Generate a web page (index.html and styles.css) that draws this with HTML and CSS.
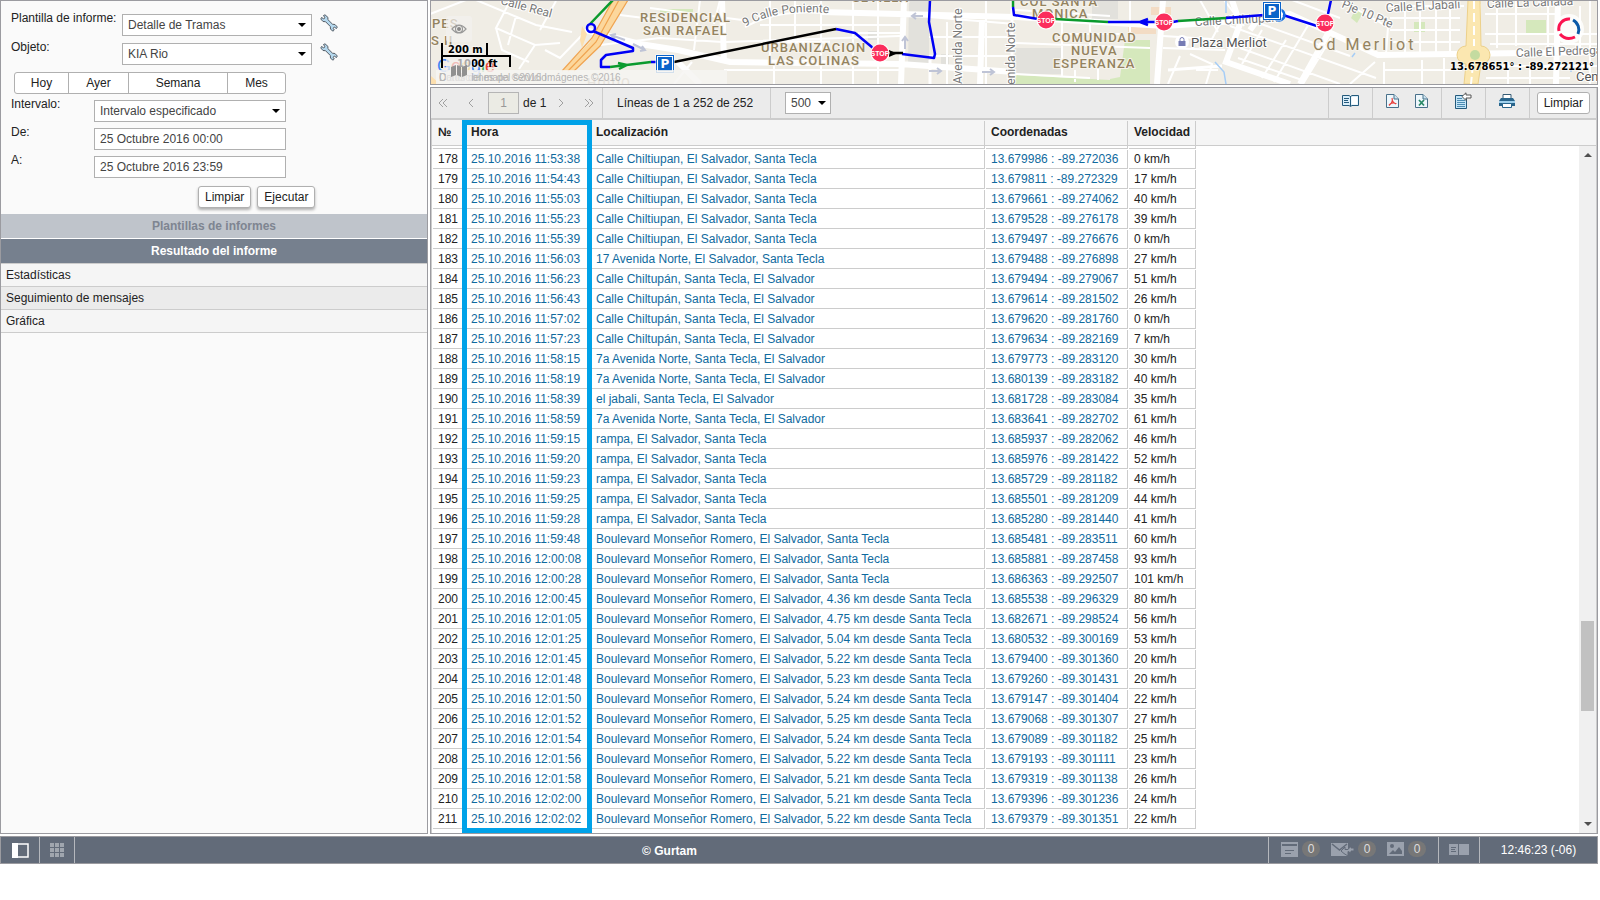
FILE: index.html
```html
<!DOCTYPE html>
<html lang="es">
<head>
<meta charset="utf-8">
<title>Informes</title>
<link rel="stylesheet" href="styles.css">
</head>
<body>
<div class="app">
<div class="workspace">
<aside class="side">
  <form class="form">
    <div class="field"><label class="wide-label" for="tpl">Plantilla de informe:</label><span class="select wide"><select id="tpl"><option>Detalle de Tramas</option></select></span><button type="button" class="tool" aria-label="Propiedades de plantilla"><svg width="18" height="18" viewBox="0 0 18 18"><path class="wrench" d="M3.500 1.500 5 .8 8 3.500 7.800 5.500 12.500 10.200 15 10.500 17.300 13 16.500 14.500 14.300 13.200 13 14.300 14.300 16 13 17.200 10.500 15.200 10.300 12.500 5.500 7.700 3 7.500.8 5 1.500 3.500 3.700 4.800 5 3.800Z"/></svg></button></div>
    <div class="field"><label class="wide-label" for="obj">Objeto:</label><span class="select wide"><select id="obj"><option>KIA Rio</option></select></span><button type="button" class="tool" aria-label="Propiedades de objeto"><svg width="18" height="18" viewBox="0 0 18 18"><path class="wrench" d="M3.500 1.500 5 .8 8 3.500 7.800 5.500 12.500 10.200 15 10.500 17.300 13 16.500 14.500 14.300 13.200 13 14.300 14.300 16 13 17.200 10.500 15.200 10.300 12.500 5.500 7.700 3 7.500.8 5 1.500 3.500 3.700 4.800 5 3.800Z"/></svg></button></div>
    <div class="periods"><button type="button" class="hoy">Hoy</button><button type="button" class="ayer">Ayer</button><button type="button" class="semana">Semana</button><button type="button" class="mes">Mes</button></div>
    <div class="field"><label class="label" for="intv">Intervalo:</label><span class="select mid"><select id="intv"><option>Intervalo especificado</option></select></span></div>
    <div class="field"><label class="label" for="from">De:</label><input class="text mid" id="from" type="text" value="25 Octubre 2016 00:00"></div>
    <div class="field"><label class="label" for="to">A:</label><input class="text mid" id="to" type="text" value="25 Octubre 2016 23:59"></div>
    <div class="actions"><button type="button" class="btn raised">Limpiar</button><button type="button" class="btn raised">Ejecutar</button></div>
  </form>
  <h2 class="bar muted">Plantillas de informes</h2>
  <h2 class="bar">Resultado del informe</h2>
  <ul class="results"><li><a href="#stats">Estadísticas</a></li><li class="on"><a href="#messages">Seguimiento de mensajes</a></li><li><a href="#chart">Gráfica</a></li></ul>
</aside>

<main class="main">
<section class="map" aria-label="Mapa">
<svg class="map-svg" viewBox="431 1 1166 83" preserveAspectRatio="xMinYMin slice">
  <defs>
    <g id="stop"><circle r="9.500" fill="#fff"/><circle r="8.500" fill="#fb2d5c"/><text class="stop-text" y="3" text-anchor="middle">STOP</text></g>
    <g id="park"><rect x="-9.500" y="-9.500" width="19" height="19" fill="#fff"/><rect x="-9" y="-9" width="18" height="18" fill="#0a63c9"/><rect x="-7.500" y="-7.500" width="15" height="15" fill="none" stroke="#fff"/><text class="park-text" y="4" text-anchor="middle">P</text></g>
  </defs>
  <rect x="431" y="1" width="1166" height="83" fill="#f0ede5"/>
  <!-- blocks and parks -->
  <path fill="#e2e1dc" d="M909 0h20v66h-21zM941 54h8v11h-8zM868 31h10v9h-10zM1015 48h47v26h-47zM1092 0h26v19h-26z"/>
  <path fill="#d5e8bc" d="M1015 75 1110 80V84H1015ZM1125 40H1150V84H1110V79L1120 77ZM1414 22h11v10h-11zM1526 20h20v13h-20zM1356 8 1363 13 1357 23 1351 18ZM660 9h33v4h-33z"/>
  <path fill="#f3dcc4" d="M1128 27h28v7h-28zM1151 7h20v8h-20z"/>
  <!-- minor streets -->
  <g fill="none" stroke="#fff" stroke-width="2">
    <path d="M466 0 430 14M476 0 536 25 572 32M510 1 496 28 535 45 560 43M496 28 502 50 529 62M516 16 508 45M535 45 519 69M556 1 540 30M585 32 560 58 545 50M620 15 660 20M650 8 742 20M700 0 694 50M720 0 714 24M600 45 660 38 722 42M674 84 692 62M770 0V58M795 0V44M821 0V84M853 0V84M878 0V84M760 25H900M725 42 900 36M724 70H900M774 60V84M858 33H905M947 22V84M929 17 1015 24M929 37H1015M986 0V84M929 56H1015M1062 18V78M1090 18V46M1015 43 1150 48M1062 34H1120M1015 74 1090 78M1098 66V80M1075 70V82M1130 0V40M1015 10 1110 16M1163 48 1225 50M1180 56 1168 84M1190 54 1212 64 1206 84M1196 70H1218M1163 36 1212 39 1222 20"/>
    <path d="M1200 0 1218 32M1224 0 1244 26M1230 26 1376 78M1240 48 1340 84M1238 58 1302 80M1250 20 1350 56M1262 30 1242 64M1286 40 1262 78M1310 22 1274 82M1331 38 1303 84M1292 0 1340 18M1340 0 1388 27 1386 54M1375 62 1350 84M1388 6H1464M1390 18H1460M1390 30H1460M1392 42H1460M1405 4V54M1420 4V54M1436 4V54M1450 0V54M1384 62V84M1422 60V84M1444 58V84M1384 70H1462M1480 4V50M1497 4V48M1516 0V46M1548 6V50M1580 6V50M1485 14H1560M1485 34H1597M1490 44H1597M1486 66H1597M1486 78H1570M1508 62V84M1530 62V84M1590 0V84"/>
  </g>
  <!-- main streets -->
  <g fill="none" stroke="#fff" stroke-width="6">
    <path d="M585 30 640 44 678 50 730 62 900 64 1015 72M722 0 724 62M678 62 700 84M821 12 1015 17 1165 26 1222 22 1290 14 1378 55 1597 52M904 0 901 84M982 20 980 84M1163 0 1157 84M1232 0 1240 24 1226 62 1290 84M1330 30 1300 84M1558 0 1556 84M1262 14 1250 30"/>
    <path stroke-width="3" d="M930 60V84M1012 0V84M770 42H830M1168 70 1222 66"/>
  </g>
  <path fill="none" stroke="#a6cdf6" stroke-width="1.500" d="M1215 62 1224 72 1226 84M1226 0V13M1355 53 1352 57M1571 66V72"/>
  <!-- avenue and motorway -->
  <path fill="#fcd79c" d="M613 0H628L600 46 574 71H562L590 42Z"/><path fill="none" stroke="#f0a450" stroke-width="1.200" d="M613 0 592 38 562 71M619 0 596 42 568 71M628 0 600 46 574 71"/>
  <path fill="#fcdfae" d="M582 26 587 34 582 48 580 40ZM431 76 440 84H431Z"/>
  <path fill="#fbe7b0" stroke="#ecd08a" d="M1468 0h12l1 46a9 9 0 0 1 0 18l-3 20h-14l2-20a9 9 0 0 1 0-18Z"/><path stroke="#fff" stroke-width="2" stroke-dasharray="9 4" d="M1474 0V46M1473 64 1471 84"/><circle cx="1475" cy="55" r="5" fill="#c4dba0"/>
  <!-- one-way arrows -->
  <g fill="none" stroke="#bfc4d6" stroke-width="2"><path d="M923 16H912M916 13 912 16 916 19M905 49V37M902 41 905 37 908 41M929 71H941M937 68 941 71 937 74M982 72H994M990 69 994 72 990 75M625 40 611 35M616 34 611 35 615 39M633 44 645 50M642 46 645 50 640 51"/></g>
  <!-- labels -->
  <g class="district">
    <text x="640" y="22">RESIDENCIAL</text><text x="643" y="35">SAN RAFAEL</text>
    <text x="761" y="52">URBANIZACION</text><text x="768" y="65">LAS COLINAS</text>
    <text x="852" y="2">SEVILLA</text><text x="1020" y="6">COL SANTA</text><text x="1032" y="18">MONICA</text>
    <text x="1052" y="42">COMUNIDAD</text><text x="1071" y="55">NUEVA</text><text x="1053" y="68">ESPERANZA</text>
    <text x="432" y="28">PES</text><text x="431" y="45">S II</text><text x="587" y="87">HUIDO</text>
    <text class="city" x="1313" y="50">Cd Merliot</text>
  </g>
  <g class="street">
    <text transform="translate(500 4) rotate(15)">Calle Real</text>
    <path id="poniente" fill="none" d="M745 27Q780 7 834 14"/><text><textPath href="#poniente">9 Calle Poniente</textPath></text>
    <text transform="translate(962 84) rotate(-90)">Avenida Norte</text>
    <text transform="translate(1015 98) rotate(-90)">Avenida Norte</text>
    <text transform="translate(1195 26) rotate(-3)">Calle Chiltiupan</text>
    <text transform="translate(1341 7) rotate(23)">Pje 10 Pte</text>
    <text transform="translate(1386 12) rotate(-3)">Calle El Jabali</text>
    <text transform="translate(1487 8) rotate(-2)">Calle La Cañada</text>
    <text transform="translate(1516 57) rotate(-2)">Calle El Pedregal</text>
    <text class="place" x="1191" y="47">Plaza Merliot</text><text class="place" x="1576" y="81">Centro</text>
  </g>
  <circle cx="1182" cy="42" r="7" fill="#fff"/><path fill="#777cb4" d="M1178.500 41h7v5h-7z"/><path fill="none" stroke="#777cb4" d="M1180 41v-1.500a2 2 0 0 1 4 0V41"/>
  <!-- route -->
  <g fill="none" stroke-width="2.500" stroke-linejoin="round">
    <g stroke="#0b9a2d"><path d="M613 0 590 24M610 67 651 62M618 63 627 65 619 69M1013 0V7M1055 19 1108 22M1178 21 1226 18"/></g>
    <g stroke="#0000f5"><path d="M593 31 633 48V51L606 55 601 60V67H610M651 62H658M836 29 855 33 873 48M902 54 934 58 935 54 929 22 930 0M1013 7 1014 15 1038 19M1108 22H1156M1148 19 1140 22 1148 25M1173 22 1178 21M1226 18 1264 15M1283 15 1317 26M1328 14 1331 0"/><circle cx="591" cy="28" r="4"/></g>
    <path stroke="#000" d="M674 62 836 29M888 53H903"/><path fill="#000" stroke="none" d="M889 50v7l8-3.500z"/>
    <circle cx="1279" cy="15" r="5.500" stroke="#1670e0"/>
  </g>
  <use href="#park" x="665" y="64"/><use href="#park" x="1272" y="11"/>
  <use href="#stop" x="880" y="53"/><use href="#stop" x="1046" y="20"/><use href="#stop" x="1164" y="22"/><use href="#stop" x="1325" y="23"/>
  <!-- scale, attribution and controls -->
  <text class="google" x="437" y="72"><tspan fill="#4285f4">G</tspan><tspan fill="#ea4335">o</tspan><tspan fill="#fbbc05">o</tspan><tspan fill="#4285f4">g</tspan><tspan fill="#34a853">l</tspan><tspan fill="#ea4335">e</tspan></text>
  <path fill="#f6f5f2" fill-opacity=".85" d="M436 70H727V84H436z"/>
  <text class="credit" x="439" y="81">Datos del mapa ©2016 Imágenes ©2016</text><text class="credit" x="439" y="81">Condiciones del servicio</text>
  <path fill="none" stroke="#000" stroke-width="2" d="M442 43V68M442 56H510V67M487 43V56"/>
  <text class="scale" x="448" y="53">200 m</text><text class="scale" x="457" y="67">1000 ft</text>
  <g fill="#f2f1ef" fill-opacity=".7"><rect x="446" y="16" width="26" height="26" rx="3"/><rect x="446" y="57" width="26" height="26" rx="3"/></g>
  <g fill="none" stroke="#999" stroke-width="1.200"><path d="M452 29Q459 21 466 29 459 37 452 29Z"/><circle cx="459" cy="29" r="3.500"/></g><circle cx="459" cy="29" r="2" fill="#888"/>
  <path fill="#909090" d="M451 67 456 65V75L451 77ZM457 65 461 67V77L457 75ZM462 67 467 65V75L462 77Z"/>
  <text class="position" x="1594" y="70" text-anchor="end">13.678651° : -89.272121°</text>
  <circle cx="1569" cy="29" r="15" fill="#fff" fill-opacity=".8"/>
  <g fill="none" stroke-width="3"><path stroke="#fb1450" d="M1559 31A10 10 0 0 1 1570 19M1560 34Q1566 41 1575 37"/><path stroke="#0c5aa8" d="M1573 20A11 11 0 0 1 1578 34"/></g>
</svg>
</section>

<section class="report">
  <div class="toolbar">
    <div class="cell pager">
      <button type="button" class="nav" aria-label="Primera"><svg width="10" height="10" viewBox="0 0 10 10"><path d="M5 1 1 5 5 9M9 1 5 5 9 9"/></svg></button>
      <button type="button" class="nav" aria-label="Anterior"><svg width="10" height="10" viewBox="0 0 10 10"><path d="M7 1 3 5 7 9"/></svg></button>
      <span class="page"><input type="text" value="1" aria-label="Página" disabled>de 1</span>
      <button type="button" class="nav" aria-label="Siguiente"><svg width="10" height="10" viewBox="0 0 10 10"><path d="M3 1 7 5 3 9"/></svg></button>
      <button type="button" class="nav" aria-label="Última"><svg width="10" height="10" viewBox="0 0 10 10"><path d="M1 1 5 5 1 9M5 1 9 5 5 9"/></svg></button>
    </div>
    <div class="cell lines">Líneas de 1 a 252 de 252</div>
    <div class="cell count"><span class="select small"><select aria-label="Filas por página"><option>500</option></select></span></div>
    <div class="cell icons"><button type="button" class="icon" aria-label="Ver"><svg width="17" height="18" viewBox="0 0 17 18"><path fill="#d9edf9" stroke="#245a7c" d="M.5 3.500H7L8.500 4.500 10 3.500H16.500V13.500H10L8.500 14.500 7 13.500H.5Z"/><path fill="#fff" d="M9.500 5h6v7.500h-6z"/><path stroke="#245a7c" d="M8.500 4v10M2 6.500h5M2 8.500h4M2 10.500h5"/></svg></button></div>
    <div class="cell icons pair"><button type="button" class="icon" aria-label="PDF"><svg width="13" height="18" viewBox="0 0 13 18"><path fill="#eef7fc" stroke="#48708a" d="M.5 2.500H8L12.500 7V15.500H.5Z"/><path fill="#cde6f3" stroke="#48708a" d="M8 2.500V7H12.500"/><path fill="none" stroke="#e9403c" stroke-width="1.200" d="M6 6C7 9 5 12 3 13.500M3 13Q5 10 10.500 11.500M6 8Q7 11 10 12"/></svg></button><button type="button" class="icon" aria-label="Excel"><svg width="13" height="18" viewBox="0 0 13 18"><path fill="#eef7fc" stroke="#48708a" d="M.5 2.500H8L12.500 7V15.500H.5Z"/><path fill="#cde6f3" stroke="#48708a" d="M8 2.500V7H12.500"/><path fill="none" stroke="#2b8a68" stroke-width="1.800" d="M4 8 9 13.500M9 8 4 13.500"/></svg></button></div>
    <div class="cell icons"><button type="button" class="icon" aria-label="Exportar"><svg width="17" height="18" viewBox="0 0 17 18"><path fill="#c5e5f7" stroke="#245a7c" d="M.5 3.500H8L11.500 7V16.500H.5Z"/><path stroke="#4d8db3" d="M2 6.500h5M2 8.500h8M2 10.500h8M2 12.500h8M2 14.500h8"/><path fill="#fff" stroke="#555" d="M7 4.500 11 .8V3H16V6H11V8.500Z"/></svg></button></div>
    <div class="cell icons"><button type="button" class="icon" aria-label="Imprimir"><svg width="16" height="18" viewBox="0 0 16 18"><path fill="#fff" stroke="#345b75" d="M4 7V2.500H12V7"/><path fill="#29658c" d="M2 6h12l2 3v5H0V9Z"/><path fill="#9fd0ec" d="M0 9h16v2H0z"/><path fill="#fff" stroke="#29658c" d="M3.500 11.500h9v4h-9z"/></svg></button></div>
    <div class="cell clear"><button type="button" class="btn">Limpiar</button></div>
  </div>
  <div class="report-body">
    <div class="head">
      <table class="grid"><colgroup><col class="c-num"><col class="c-time"><col class="c-loc"><col class="c-coord"><col class="c-speed"></colgroup>
      <thead><tr><th>№</th><th>Hora</th><th>Localización</th><th>Coordenadas</th><th>Velocidad</th></tr></thead></table>
    </div>
    <div class="scroll">
      <table class="grid data"><colgroup><col class="c-num"><col class="c-time"><col class="c-loc"><col class="c-coord"><col class="c-speed"></colgroup>
      <tbody>
<tr class="cut"><td><td><td><td><td></tr>
<tr><td>178<td><a href="#m">25.10.2016 11:53:38</a><td><a href="#m">Calle Chiltiupan, El Salvador, Santa Tecla</a><td><a href="#m">13.679986 : -89.272036</a><td>0 km/h</tr>
<tr><td>179<td><a href="#m">25.10.2016 11:54:43</a><td><a href="#m">Calle Chiltiupan, El Salvador, Santa Tecla</a><td><a href="#m">13.679811 : -89.272329</a><td>17 km/h</tr>
<tr><td>180<td><a href="#m">25.10.2016 11:55:03</a><td><a href="#m">Calle Chiltiupan, El Salvador, Santa Tecla</a><td><a href="#m">13.679661 : -89.274062</a><td>40 km/h</tr>
<tr><td>181<td><a href="#m">25.10.2016 11:55:23</a><td><a href="#m">Calle Chiltiupan, El Salvador, Santa Tecla</a><td><a href="#m">13.679528 : -89.276178</a><td>39 km/h</tr>
<tr><td>182<td><a href="#m">25.10.2016 11:55:39</a><td><a href="#m">Calle Chiltiupan, El Salvador, Santa Tecla</a><td><a href="#m">13.679497 : -89.276676</a><td>0 km/h</tr>
<tr><td>183<td><a href="#m">25.10.2016 11:56:03</a><td><a href="#m">17 Avenida Norte, El Salvador, Santa Tecla</a><td><a href="#m">13.679488 : -89.276898</a><td>27 km/h</tr>
<tr><td>184<td><a href="#m">25.10.2016 11:56:23</a><td><a href="#m">Calle Chiltupán, Santa Tecla, El Salvador</a><td><a href="#m">13.679494 : -89.279067</a><td>51 km/h</tr>
<tr><td>185<td><a href="#m">25.10.2016 11:56:43</a><td><a href="#m">Calle Chiltupán, Santa Tecla, El Salvador</a><td><a href="#m">13.679614 : -89.281502</a><td>26 km/h</tr>
<tr><td>186<td><a href="#m">25.10.2016 11:57:02</a><td><a href="#m">Calle Chiltupán, Santa Tecla, El Salvador</a><td><a href="#m">13.679620 : -89.281760</a><td>0 km/h</tr>
<tr><td>187<td><a href="#m">25.10.2016 11:57:23</a><td><a href="#m">Calle Chiltupán, Santa Tecla, El Salvador</a><td><a href="#m">13.679634 : -89.282169</a><td>7 km/h</tr>
<tr><td>188<td><a href="#m">25.10.2016 11:58:15</a><td><a href="#m">7a Avenida Norte, Santa Tecla, El Salvador</a><td><a href="#m">13.679773 : -89.283120</a><td>30 km/h</tr>
<tr><td>189<td><a href="#m">25.10.2016 11:58:19</a><td><a href="#m">7a Avenida Norte, Santa Tecla, El Salvador</a><td><a href="#m">13.680139 : -89.283182</a><td>40 km/h</tr>
<tr><td>190<td><a href="#m">25.10.2016 11:58:39</a><td><a href="#m">el jabali, Santa Tecla, El Salvador</a><td><a href="#m">13.681728 : -89.283084</a><td>35 km/h</tr>
<tr><td>191<td><a href="#m">25.10.2016 11:58:59</a><td><a href="#m">7a Avenida Norte, Santa Tecla, El Salvador</a><td><a href="#m">13.683641 : -89.282702</a><td>61 km/h</tr>
<tr><td>192<td><a href="#m">25.10.2016 11:59:15</a><td><a href="#m">rampa, El Salvador, Santa Tecla</a><td><a href="#m">13.685937 : -89.282062</a><td>46 km/h</tr>
<tr><td>193<td><a href="#m">25.10.2016 11:59:20</a><td><a href="#m">rampa, El Salvador, Santa Tecla</a><td><a href="#m">13.685976 : -89.281422</a><td>52 km/h</tr>
<tr><td>194<td><a href="#m">25.10.2016 11:59:23</a><td><a href="#m">rampa, El Salvador, Santa Tecla</a><td><a href="#m">13.685729 : -89.281182</a><td>46 km/h</tr>
<tr><td>195<td><a href="#m">25.10.2016 11:59:25</a><td><a href="#m">rampa, El Salvador, Santa Tecla</a><td><a href="#m">13.685501 : -89.281209</a><td>44 km/h</tr>
<tr><td>196<td><a href="#m">25.10.2016 11:59:28</a><td><a href="#m">rampa, El Salvador, Santa Tecla</a><td><a href="#m">13.685280 : -89.281440</a><td>41 km/h</tr>
<tr><td>197<td><a href="#m">25.10.2016 11:59:48</a><td><a href="#m">Boulevard Monseñor Romero, El Salvador, Santa Tecla</a><td><a href="#m">13.685481 : -89.283511</a><td>60 km/h</tr>
<tr><td>198<td><a href="#m">25.10.2016 12:00:08</a><td><a href="#m">Boulevard Monseñor Romero, El Salvador, Santa Tecla</a><td><a href="#m">13.685881 : -89.287458</a><td>93 km/h</tr>
<tr><td>199<td><a href="#m">25.10.2016 12:00:28</a><td><a href="#m">Boulevard Monseñor Romero, El Salvador, Santa Tecla</a><td><a href="#m">13.686363 : -89.292507</a><td>101 km/h</tr>
<tr><td>200<td><a href="#m">25.10.2016 12:00:45</a><td><a href="#m">Boulevard Monseñor Romero, El Salvador, 4.36 km desde Santa Tecla</a><td><a href="#m">13.685538 : -89.296329</a><td>80 km/h</tr>
<tr><td>201<td><a href="#m">25.10.2016 12:01:05</a><td><a href="#m">Boulevard Monseñor Romero, El Salvador, 4.75 km desde Santa Tecla</a><td><a href="#m">13.682671 : -89.298524</a><td>56 km/h</tr>
<tr><td>202<td><a href="#m">25.10.2016 12:01:25</a><td><a href="#m">Boulevard Monseñor Romero, El Salvador, 5.04 km desde Santa Tecla</a><td><a href="#m">13.680532 : -89.300169</a><td>53 km/h</tr>
<tr><td>203<td><a href="#m">25.10.2016 12:01:45</a><td><a href="#m">Boulevard Monseñor Romero, El Salvador, 5.22 km desde Santa Tecla</a><td><a href="#m">13.679400 : -89.301360</a><td>20 km/h</tr>
<tr><td>204<td><a href="#m">25.10.2016 12:01:48</a><td><a href="#m">Boulevard Monseñor Romero, El Salvador, 5.23 km desde Santa Tecla</a><td><a href="#m">13.679260 : -89.301431</a><td>20 km/h</tr>
<tr><td>205<td><a href="#m">25.10.2016 12:01:50</a><td><a href="#m">Boulevard Monseñor Romero, El Salvador, 5.24 km desde Santa Tecla</a><td><a href="#m">13.679147 : -89.301404</a><td>22 km/h</tr>
<tr><td>206<td><a href="#m">25.10.2016 12:01:52</a><td><a href="#m">Boulevard Monseñor Romero, El Salvador, 5.25 km desde Santa Tecla</a><td><a href="#m">13.679068 : -89.301307</a><td>27 km/h</tr>
<tr><td>207<td><a href="#m">25.10.2016 12:01:54</a><td><a href="#m">Boulevard Monseñor Romero, El Salvador, 5.24 km desde Santa Tecla</a><td><a href="#m">13.679089 : -89.301182</a><td>25 km/h</tr>
<tr><td>208<td><a href="#m">25.10.2016 12:01:56</a><td><a href="#m">Boulevard Monseñor Romero, El Salvador, 5.22 km desde Santa Tecla</a><td><a href="#m">13.679193 : -89.301111</a><td>23 km/h</tr>
<tr><td>209<td><a href="#m">25.10.2016 12:01:58</a><td><a href="#m">Boulevard Monseñor Romero, El Salvador, 5.21 km desde Santa Tecla</a><td><a href="#m">13.679319 : -89.301138</a><td>26 km/h</tr>
<tr><td>210<td><a href="#m">25.10.2016 12:02:00</a><td><a href="#m">Boulevard Monseñor Romero, El Salvador, 5.21 km desde Santa Tecla</a><td><a href="#m">13.679396 : -89.301236</a><td>24 km/h</tr>
<tr><td>211<td><a href="#m">25.10.2016 12:02:02</a><td><a href="#m">Boulevard Monseñor Romero, El Salvador, 5.22 km desde Santa Tecla</a><td><a href="#m">13.679379 : -89.301351</a><td>22 km/h</tr>
      </tbody></table>
      <div class="scrollbar"><i class="arrow up"></i><span class="track"><i class="thumb"></i></span><i class="arrow"></i></div>
    </div>
    <div class="highlight"></div>
  </div>
</section>
</main>
</div>

<footer class="footer">
  <button type="button" class="foot panel" aria-label="Panel"><svg width="17" height="15" viewBox="0 0 17 15"><path fill="none" stroke="#fff" stroke-width="1.500" d="M1 1H16V14H1Z"/><path fill="#fff" d="M0 0h6v15H0z"/></svg></button>
  <button type="button" class="foot apps" aria-label="Aplicaciones"><svg width="15" height="15" viewBox="0 0 15 15"><path fill="#a0a6ae" d="M0 0h4v4H0zM5 0h4v4H5zM10 0h4v4h-4zM0 5h4v4H0zM5 5h4v4H5zM10 5h4v4h-4zM0 10h4v4H0zM5 10h4v4H5zM10 10h4v4h-4z"/></svg></button>
  <div class="copy">© Gurtam</div>
  <div class="foot counters">
    <svg width="17" height="15" viewBox="0 0 17 15"><path fill="#9aa1ad" d="M0 0h17v15H0z"/><path stroke="#626b79" stroke-width="2" d="M1 3h15"/><path stroke="#626b79" d="M4 8.500h9M4 11.500h6"/></svg><b class="badge">0</b>
    <svg class="gap" width="23" height="15" viewBox="0 0 23 15"><path fill="#9aa1ad" d="M0 1h17v13H0z"/><path fill="none" stroke="#626b79" stroke-width="1.500" d="M1 2 8.500 8 16 2"/><path fill="#9aa1ad" stroke="#626b79" d="M10 9 14 5V7.500H17L20 4V6H23V9H20V11L17 9.500V14L13 11.500Z"/></svg><b class="badge">0</b>
    <svg class="gap" width="17" height="14" viewBox="0 0 17 14"><path fill="#9aa1ad" d="M0 0h17v14H0z"/><circle cx="5" cy="4" r="2" fill="#626b79"/><path fill="#626b79" d="M2 12 6 8 8 10 12 5 15 9V12Z"/></svg><b class="badge">0</b>
  </div>
  <button type="button" class="foot book" aria-label="Registro"><svg width="20" height="12" viewBox="0 0 20 12"><path fill="#9aa1ad" d="M0 0h9v11H0zM10 0h10v11H10z"/><path stroke="#626b79" d="M2 3.500h5M2 5.500h4M2 7.500h5"/></svg></button>
  <div class="foot clock">12:46:23 (-06)</div>
</footer>
</div>
</body>
</html>
```
FILE: styles.css
```css
* { box-sizing: border-box; }
body { margin: 0; background: #fff; color: #222; font: 12px/16px "Liberation Sans", Arial, sans-serif; }
button, input, select { font: inherit; color: inherit; margin: 0; }
button { cursor: pointer; padding: 0; border: 0; background: none; color: #222; }
a { color: inherit; text-decoration: none; }
h2 { margin: 0; font-size: 12px; }

.app { display: flex; flex-direction: column; height: calc(100vh - 36px); min-height: 500px; margin-right: 2px; }
.workspace { flex: 1; display: flex; gap: 2px; min-height: 0; }

.side { flex: none; width: 428px; border: 1px solid #9b9ba0; background: #fafafa; }
.form { display: flex; flex-direction: column; gap: 6px; padding: 13px 10px 4px; }
.field { display: flex; align-items: flex-start; height: 22px; }
.field:first-child, .field:nth-child(2) { margin-bottom: 1px; }
.wide-label { width: 111px; margin-top: -4px; white-space: nowrap; }
.label { width: 83px; margin-top: -4px; }
.select { position: relative; display: inline-block; height: 22px; }
.select::after { content: ""; position: absolute; right: 6px; top: 9px; border: solid transparent; border-width: 4px 4px 0; border-top-color: #000; pointer-events: none; }
.select select { appearance: none; width: 100%; height: 100%; border-radius: 0; }
.select select, .text { border: 1px solid #b0b0b0; background: #fff; color: #444; padding: 0 5px; }
.text { height: 22px; }
.wide { width: 190px; }
.mid { width: 192px; }
.small { width: 46px; }
.small::after { right: 5px; }
.tool { margin-left: 8px; height: 18px; }
.wrench { fill: #b5d8ee; stroke: #555d66; }
.periods { display: flex; width: 272px; height: 22px; margin-left: 3px; border: 1px solid #b0b0b0; border-radius: 3px; background: #fff; }
.periods button { border-right: 1px solid #b0b0b0; }
.periods button:last-child { border: 0; }
.hoy { width: 54px; }
.ayer { width: 60px; }
.semana { width: 99px; }
.mes { flex: 1; }
.actions { display: flex; gap: 6px; margin-left: 187px; padding: 2px 0; }
.btn { height: 22px; padding: 0 6px; border: 1px solid #b0b0b0; border-radius: 3px; background: #fff; }
.raised { box-shadow: 0 2px 3px rgba(0, 0, 0, .3); }
.bar { height: 25px; border-bottom: 1px solid #ccc; background: #76808e; color: #fff; text-align: center; line-height: 24px; }
.bar.muted { border-bottom-color: #fff; background: #bfc4cb; color: #7e8591; }
.results { list-style: none; margin: 0; padding: 0; }
.results li { height: 23px; padding: 0 5px; border-bottom: 1px solid #ccc; background: #f5f5f5; line-height: 22px; }
.results .on { background: #ebebeb; }

.main { flex: 1; display: flex; flex-direction: column; gap: 2px; min-width: 0; }
.map { flex: none; height: 85px; border: 1px solid #9b9ba0; overflow: hidden; }
.map-svg { display: block; width: 100%; height: 100%; }
.district { font: 500 13px Roboto, sans-serif; letter-spacing: 1px; fill: #94835f; stroke: #f6f3ec; stroke-width: 2px; paint-order: stroke; }
.district .city { font-size: 16px; font-weight: 400; letter-spacing: 3px; }
.street { font: 12px Roboto, sans-serif; fill: #787878; stroke: #fff; stroke-width: 2px; paint-order: stroke; }
.street .place { font-size: 13px; fill: #555; }
.stop-text { font: bold 7px "Liberation Sans", sans-serif; fill: #fff; }
.park-text { font: bold 12px "DejaVu Sans", sans-serif; fill: #fff; }
.google { font: 18px "Liberation Sans", sans-serif; }
.credit { font: 10px "Liberation Sans", sans-serif; fill: #b5b5b5; }
.scale, .position { font: bold 10px "DejaVu Sans", sans-serif; fill: #000; stroke: #fff; stroke-opacity: .5; stroke-width: 2px; paint-order: stroke; }

.report { flex: 1; display: flex; flex-direction: column; min-height: 0; border: 1px solid #9b9ba0; }
.toolbar { flex: none; display: flex; height: 32px; border-bottom: 2px solid #ccc; border-right: 1px solid #ccc; background: #ebebeb; }
.cell { display: flex; align-items: center; border-left: 1px solid #ccc; }
.pager { width: 171px; padding-left: 7px; border: 0; }
.nav { width: 10px; height: 10px; margin-right: 18px; }
.nav:last-child { margin: 0; }
.nav svg { display: block; fill: none; stroke: #a0a0a0; }
.page { display: flex; align-items: center; gap: 4px; width: 68px; margin-left: -6px; }
.page input { width: 31px; height: 22px; border: 1px solid #b5b5b5; background: #ebebe4; color: #999; text-align: center; padding: 0; }
.lines { width: 168px; padding-left: 14px; }
.count { flex: 1; padding-left: 14px; }
.icons { width: 44px; justify-content: center; padding-bottom: 4px; }
.pair { width: 69px; gap: 16px; }
.icon svg { display: block; fill: none; }
.clear { padding: 0 6px 0 7px; }
.report-body { position: relative; flex: 1; display: flex; flex-direction: column; min-height: 0; border: solid #ccc; border-width: 0 1px; }
.head { flex: none; height: 26px; border-bottom: 1px solid #ccc; background: #f5f5f5; }
.grid { width: 765px; table-layout: fixed; border-spacing: 1px; }
.grid th, .grid td { height: 19px; padding: 0 5px; border: solid #ccc; border-width: 0 1px 1px 0; text-align: left; white-space: nowrap; }
.grid th { height: 24px; border-bottom: 0; padding-bottom: 2px; }
.data td { line-height: 18px; }
.data a { color: #0f6a9e; }
.grid .cut td { height: 3px; line-height: 0; }
.c-num { width: 32px; }
.c-time { width: 124px; }
.c-loc { width: 394px; }
.c-coord { width: 142px; }
.c-speed { width: 67px; }
.scroll { flex: 1; display: flex; justify-content: space-between; align-items: flex-start; min-height: 0; overflow: hidden; }
.data { margin-top: -1px; }
.scrollbar { display: flex; flex-direction: column; justify-content: space-between; align-items: center; width: 17px; height: 100%; padding: 7px 0; background: #f0f0f0; }
.arrow { border: solid transparent; border-width: 4px 4px 0; border-top-color: #505050; }
.arrow.up { border-width: 0 4px 4px; border-bottom-color: #505050; }
.track { flex: 1; width: 13px; margin: 6px 0; display: flex; flex-direction: column; }
.track::before { content: ""; flex: 457; }
.track::after { content: ""; flex: 105; }
.thumb { flex: 89; background: #c1c1c1; }
.highlight { position: absolute; left: 30px; top: 0; bottom: 0; width: 130px; border: 5px solid #00a2e8; pointer-events: none; }

.footer { flex: none; display: flex; height: 28px; margin-top: 2px; border: 1px solid #9b9ba0; background: #626b79; color: #fff; }
.foot { display: flex; align-items: center; justify-content: center; border-left: 1px solid #b5b8bd; }
.panel { width: 39px; border-width: 0 1px 0 0; border-right: 1px solid #b5b8bd; }
.apps { width: 35px; border-width: 0 1px 0 0; border-right: 1px solid #b5b8bd; }
.copy { flex: 1; padding-right: 4px; text-align: center; font-weight: bold; line-height: 28px; }
.counters { width: 170px; gap: 4px; padding-bottom: 2px; }
.badge { width: 18px; height: 16px; border-radius: 8px; background: #777777; color: #ddd; text-align: center; font-weight: normal; }
.gap { margin-left: 7px; }
.book { width: 41px; }
.clock { width: 118px; }
```
